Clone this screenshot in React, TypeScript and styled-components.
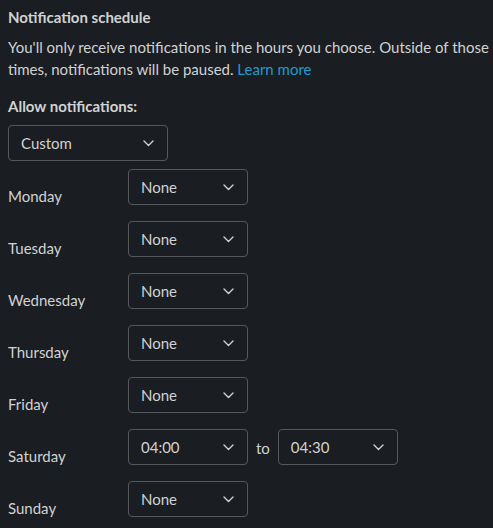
import React from "react";
import styled, { createGlobalStyle } from "styled-components";

const GlobalStyle = createGlobalStyle`
  html, body {
    margin: 0;
    background: #1a1d21;
  }
  body {
    font-family: Lato, "Noto Sans", sans-serif;
    color: #d1d2d3;
  }
`;

const Page = styled.div`
  padding: 6px 0 0 8px;
  width: 485px;
  min-height: 522px;
  font-size: 15px;
  line-height: 22px;
`;

const Title = styled.h2`
  margin: 0;
  font-size: 15px;
  font-weight: 700;
  line-height: 22px;
  color: #d1d2d3;
`;

const Intro = styled.p`
  margin: 8px 0 0;
`;

const Link = styled.a`
  color: #1d9bd1;
  text-decoration: none;
`;

const FieldLabel = styled.div`
  margin-top: 15px;
  font-weight: 700;
`;

const SelectBox = styled.div<{ $width: number }>`
  box-sizing: border-box;
  width: ${(p) => p.$width}px;
  height: 36px;
  display: flex;
  align-items: center;
  justify-content: space-between;
  padding: 0 13px 0 12px;
  border: 1px solid #56585c;
  border-radius: 4px;
  color: #d1d2d3;
  font-size: 15px;
`;

const Chevron = () => (
  <svg width="11" height="7" viewBox="0 0 11 7" fill="none">
    <polyline
      points="1,1 5.5,5.5 10,1"
      stroke="#d1d2d3"
      strokeWidth="1.4"
      strokeLinecap="round"
      strokeLinejoin="round"
    />
  </svg>
);

const Select = ({ value, width = 120 }: { value: string; width?: number }) => (
  <SelectBox $width={width}>
    <span>{value}</span>
    <Chevron />
  </SelectBox>
);

const AllowSelect = styled.div`
  margin-top: 8px;
`;

const Days = styled.div`
  margin-top: 8px;
  display: flex;
  flex-direction: column;
  gap: 15px;
`;

const Row = styled.div`
  display: grid;
  grid-template-columns: 120px auto;
  align-items: start;
`;

const DayName = styled.div`
  padding-top: 17px;
  line-height: 20px;
`;

const Range = styled.div`
  display: flex;
  align-items: center;
  gap: 8px;
`;

const To = styled.span`
  margin-top: 2px;
`;

const days: { name: string; from: string; to?: string }[] = [
  { name: "Monday", from: "None" },
  { name: "Tuesday", from: "None" },
  { name: "Wednesday", from: "None" },
  { name: "Thursday", from: "None" },
  { name: "Friday", from: "None" },
  { name: "Saturday", from: "04:00", to: "04:30" },
  { name: "Sunday", from: "None" },
];

export default function App() {
  return (
    <Page>
      <GlobalStyle />
      <Title>Notification schedule</Title>
      <Intro>
        You'll only receive notifications in the hours you choose. Outside of those
        times, notifications will be paused. <Link href="#">Learn more</Link>
      </Intro>
      <FieldLabel>Allow notifications:</FieldLabel>
      <AllowSelect>
        <Select value="Custom" width={160} />
      </AllowSelect>
      <Days>
        {days.map((d) => (
          <Row key={d.name}>
            <DayName>{d.name}</DayName>
            <Range>
              <Select value={d.from} />
              {d.to && (
                <>
                  <To>to</To>
                  <Select value={d.to} />
                </>
              )}
            </Range>
          </Row>
        ))}
      </Days>
    </Page>
  );
}
